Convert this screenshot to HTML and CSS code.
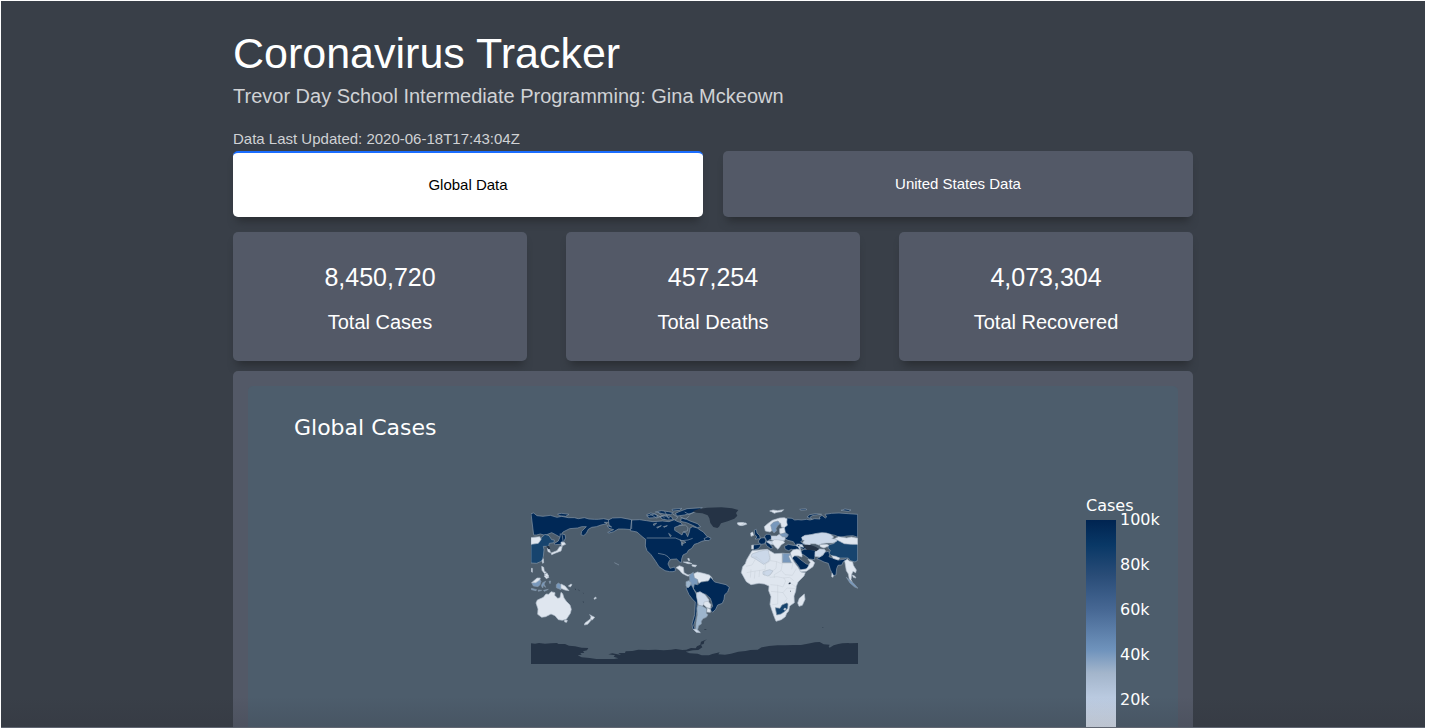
FILE: index.html
```
<!DOCTYPE html>
<html lang="en">
<head>
<meta charset="utf-8">
<title>Coronavirus Tracker</title>
<link rel="stylesheet" href="styles.css">
</head>
<body>
<div class="page">
<main class="container">
  <header class="header">
    <h1 class="title">Coronavirus Tracker</h1>
    <p class="subtitle">Trevor Day School Intermediate Programming: Gina Mckeown</p>
    <p class="updated">Data Last Updated: 2020-06-18T17:43:04Z</p>
  </header>
  <nav class="tabs" aria-label="Data region">
    <button type="button" class="tab tab-selected" aria-pressed="true">Global Data</button>
    <button type="button" class="tab" aria-pressed="false">United States Data</button>
  </nav>
  <section class="stats">
    <div class="stat"><p class="stat-value">8,450,720</p><p class="stat-label">Total Cases</p></div>
    <div class="stat"><p class="stat-value">457,254</p><p class="stat-label">Total Deaths</p></div>
    <div class="stat"><p class="stat-value">4,073,304</p><p class="stat-label">Total Recovered</p></div>
  </section>
  <section class="card">
    <div class="chart">
      <h2 class="chart-title">Global Cases</h2>
      <div class="plot">
        <svg class="map" viewBox="18 18 981 474" role="img" aria-label="World map of cases by country">
          <!-- Eastern Asia and Alaska -->
          <g class="high">
            <path d="M18 41l8-2 10 8 18 2 22-3 20 6 14-3 20 4 18 0 12 3 18-3 14 4 16 1 12 0 16-2 22 5-8 6-12 0 8 4-18 4-14 5-14 2-10 6-6 12-8 7-8-3 2-10 14-14-14 0-12 4-24 2-20 10-4 6 10 2 2 10-8 14-8 6-2-8 2-14-14-8-12-6-20 8-14-4-12 3-8 0z"/>
            <path d="M98 42l12-2 22 3-10 6-20-2zM106 101l6 6 2 16-7 10-16 1-4-3 13-8 5-12zM250 60l12-6 26-1 32 6v30l-24-2-16 0-14 8-14 4-4-2 18-8-14-4-6-8 14 4-8-6z"/>
          </g>
          <path class="mid" d="M18 130l26-5 6-13 10-9 12 4 8 12 8 1-1 8-14 2-2 9-16 0 2 10-2 20-4 14-16 7-17-1z"/>
          <path class="low" d="M18 113l26-3 4 8-8 12-22 3zM67 144l6 4 4 10-8-3zM108 126l10 1 4 6-12 5zM112 139l-4 14-16 6-12 5-2-5 18-7 8-12zM51 182l4-6 1 12-3 2zM19 205l3 0 0 12-3-2z"/>
          <path class="low" d="M50 199l6 3 2 12 6 3-5 4-8-10zM57 228l10-4 5 8-8 4z"/>
          <path class="line" d="M268 188l14 7"/>
          <path class="none" d="M64 138l8 0 4 8-6 2z"/>
          <!-- North America -->
          <g transform="translate(315 0)">
            <g class="high">
              <path d="M5 60l24-1 20 3 20 3 28-2 20 2 16-6 8 5 12 4 4 6-10 2-4 14 14 6 10 2 6 12 5-14 2-12 8-4 14 4 8 6 10 6 10 12 7 8-6 4-16 4-12 6-10 3-8 12-10 6-4 8-12 6-4 12-1 11-6-3-8-8-16 1-6 4-4 10 6 13 14-4 3 11-8 3-10 0-14-3-18-12-10-16-14-20-12-12-5-14 1-20-8-6-8-7-10-9-20-4z"/>
              <path d="M50 44l12-5 14 3 8 6-8 5-20 1zM76 36l18-4 22 3 14 3-8 6-20-2zM90 50l18-4 16 4 6 9-18 1-16-3zM135 41l12-6 24-9 46-3-10 7-20 9-24 6-20 3zM154 54l12 2 14 7 22 8 10 9-10 3-14-7-18-8-18-4zM222 116l12-6 9 5-6 7-12-1zM126 28l30-3-8 6-20 2z"/>
            </g>
            <path class="line" d="M5 60v27M50 114h86l20 8 18-2 14-5M50 48l24-6 20 10M60 42l20 12 20-8 20 8M84 36l20 18M104 34l12 22M164 36l14 8 14-8M150 50l16 8 12-10M128 42l16 10-10 10M84 160l20 4 10 6 8 10"/>
            <path class="lakes" d="M70 72l10-3-8 8zM80 82l14-5-11 7zM100 80l12-3-10 5zM116 100l8 7-3 3zM134 82l14-5 18-2 8 8-2 10-12 2-4 10-12-8-10-6zM150 120l10 3 8 4-10 4zM154 128l4 0 0 8-3 0z"/>
            <path class="none" d="M188 34l18-7 26-4 42-1 32 3 19 5-7 9 4 8-9 9-20 8-20 6-6 10-5 4-12-3-9-12-3-14-5-9-16-6-18-2z"/>
            <path class="low" d="M322 70l10-2 16 1 2 4-14 4-10-2zM160 186l14 0 12 5-12 0zM186 194l14 2-4 5-10-3zM173 176l4-1 2 7-3 0z"/>
            <path class="low" d="M138 203l10-6 12 5 2 16 12 7 9-2 1 5-12 0-16-8-8-10zM190 222l12-6 18 4 18 5 8 8 2 10-8 3-10-3-8 2-8 8-8-5-4-8-14-3z"/>
            <path class="blue" d="M178 225l12-8 3 16 10 6 0 12-4 6 0 12-10-8-14-7 4-16z"/>
          </g>
          <!-- South America -->
          <g transform="translate(315 225)">
            <path class="high" d="M190 42l3-15 10 2 10-8 22-3 7-11 12 14 34 8 10 8-5 14-9 8-2 14-5 12-14 5-6 13-9 9-8-8 8-10-3-12-4-12-14-12-16-2-12-4-8-10zM172 31l12-2 8 15 6 12 6 15-3 18 0 20-4 22-6 20 5 15-8-5-2-14 8-28 2-38-9-9-10-13-8-18z"/>
            <path class="gray" d="M168 20l8-3 8 6-4 10-6 6-6-6z"/>
            <path class="pale" d="M200 54l10-4 15 9 12 16-4 10-12 3-6 8-9-3-3-14-3-12z"/>
            <path class="low" d="M222 81l12-2 9 10-2 11-10-2-10-9zM232 98l10 6-1 8-11-1z"/>
            <path class="gray" d="M204 90l12 3 14 8-1 14 5 4-5 8-10 4-5 8 0 8-8 5-3 12 6 8-12-9 1-20 4-24-1-20z"/>
            <path class="pale" d="M190 163l9 0 12 10-12-1z"/>
            <path class="none" d="M222 162l9 1-6 2z"/>
          </g>
          <!-- Oceania -->
          <g transform="translate(0 225)">
            <path class="low" d="M38 118l1-16-6-18 4-9 18-8 8-10 8 1 7-8 12 3-1 8 9 9 7-2 3-16 5 4 4 13 7 10 11 11 4 13-3 12-12 18-12 3-12-2-10-12-12-5-16 8-12 2zM119 135l8 1-2 6-6-1zM194 119l7 4 8 4-7 8-6-2 2-8zM196 132l2 4-10 12-10 2 2-6z"/>
            <path class="blue" d="M20 23l9-1 14-11 5 8-3 10-6 6-14-2zM53 23l9-4-5 8 5 10-7-6-2 8-4-7zM72 19l5-1-2 8zM19 40l16 4-2 3-14-3zM40 45l10 1-10 3zM56 46l14-3-12 6zM94 29l6-5 8 5v15l-14-6z"/>
            <path class="low" d="M20 23l16-14 10 0-2 6-12 8zM108 27l12 6 12 14-12-2-12-5zM130 33l8-6 3 2-5 7zM207 70l5-4 2 4-6 3zM58-1l8-5 5 9-5 3z"/>
            <path class="none" d="M147 36l2 4 4 3-1 3zM158 43l5 3 1 3zM173 53l3 1 0 2zM173 79l4 2-2 2z"/>
          </g>
          <!-- Antarctica -->
          <path class="ice" d="M18 430l12 1 12-2 18 2 18-1 18-1 4 3 20 0 12 5 18 2 20 4 20 1-4 7-12 3 4 5-12 0 4 5-12 2 12 6 24 2 20 3h54l12-2-14-5 4-4-20-3 12-3 26 5-8-6 20 0 2-5 20-1 18-4 30 1 22-1 24 2 22-2 14-2 20 3 12-1 14-5 14 1 4-6 10-5 2-9 18-7-8 6-2 8-8 2 4 8-12 8-16 1-22 4 12 5 24 1 12 5 22 0 10-4 22-5-4 6 20 1 18-3 22-6 22-2 14-3 22-1 12-7 22-4 26-2 24 0 24-1 22 0 20-4 22-4 14-1 12 7 18 1-3 6 3 3 12-7 14-4 12-2 18-1 4 1 24-1 14-2 12 3v63H18z"/>
          <!-- Europe and Asia -->
          <g transform="translate(630 0)">
            <path class="high" d="M150 63l7-9 14 1 8 5 10-1 10 1 16-2 10 2 14-4 16 1-2-6 8-5 10 8 4-3-5-8 20-3 22-1 28 2 28 2v69l-14-5-18 1-22 4-14-6-14-3-18 2-10-2-16 3-18-1-8 6-14 2 3 6-8 6 10 8 6 11-8 4-14-8-10-5-6-10-16-4-12-6 2-14-6-18zM216 51l8-7 20-3 16 2-12 1-16 3-7 5 6 6zM318 31l12-4 18 3-8 4zM194 28l18-2 4 3-18 2zM148 139l12-6 14 3 16 1 5 11-12 3-14-3-8 4-10-4z"/>
            <path class="high" d="M58 90l6-2 2 11 8 8 2 9-16 1 6-6-7-8zM71 122l6-8 14-1 3 8-4 10-12 2-8-6zM88 111l5-8 10 0 6 4 1 10-9 3 2 4-10-1zM55 135l18-2 5 3-8 10-12 4-4-4zM90 126l12 0 4 8 8 9-7 3-12-9z"/>
            <path class="high" d="M172 166l12 2 14 12 16 12 11 2-5 10-22 9-8-15-10-13-8-10zM197 154l10-6 14 0 18 2 3 7-3 16 0 6-16-2-16-12-10-4-4-7zM245 176l9-5 10-5 4-9 12-3 5 8-3 8 10 4 18 6 18-2 10-6-2 10-11 3-5 10-11 1-4 10-2 19-8 2-9-18-6-19-13-4-12-6z"/>
            <path class="mid" d="M278 136l10-3 10-3 6-11 10-5 8 3 12 4 14 2 20 6v52l-8 5-14-4-6-8-8 0-14 0-10 0-14-4-12-9 4-10-6-5z"/>
            <path class="pale" d="M200 112l10-6 18-2 12-3 20-3 14 1 12 4 10 8-6 5 14 2 2 5-12 6-20 0-14 2-9 4-10-4-14 0-4 7-12-5-8-4 5-8-6-2zM184 138l6-6 12 2 4 8-10-2zM198 157l-2-11-3-12-8-2z"/>
            <path class="low" d="M299 116l12-6 24 4 14-3 19 4v18l-18 0-22-2-14-7zM254 134l22-1 6 4-15 7-11-4zM166 159l8-9 12-3 10 4 5 12 0 8-12-4-10 0-8 7z"/>
            <path class="pale" d="M109 108l16 0 8-5 16 4 2 6-2 8-16 2-24-3zM98 123l16 1 14-1 3 5-8 6-16-1-10-6zM240 156l14-9 14 1 4 5-8 11-10 7-14-2z"/>
            <path class="low" d="M118 119l9 0 18 3 4 6-10 6-10 14-9-8-10-14zM134 86l14-4 3 16-14 7-3-8zM47 99l6-3 3 10-8 3zM50 136l5-1 0 12-5 0zM8 68l18 0 1 4-10 4-8-2zM104 33l10-3 14 2 18-3-6 6-14 2-8 3-8-5z"/>
            <path class="low" d="M88 80l10-9 14-10 22-7 14-1 8 4-1 9 2 10-8 6-10-1-2-12-14 4-10 8 0 9-8 6-14-3z"/>
            <path class="blue" d="M107 75l8-8 14-4 6 8-7 6-5 9 2 6-8 7-6-8zM134 103l18-5 8 6-4 8-14-2z"/>
            <path class="none" d="M203 136l14-2 10 1 16 6 9 6-8 6-14-3-14 0zM190 214l18 2 4 6-18 4z"/>
            <path class="low" d="M192 210l22-3 5-7 7-13-7-9 12 3 8 7-5 12-20 14-18 2zM329 182l8-4 6 5 10 3 2 10 9 14-2 8-8-4-4 9-2 16 4 8-9-9-3-16-6-10zM352 225l7 3 4 6-8-2zM291 220l4 6-1 6-4-2zM290 167l12 2 12 5-4 6-15-5z"/>
            <path class="low" d="M51 152l22-2 24-2 10 6 12 7 22-1 23 1 4 9 10 17 12 16 7 13 14 2-4 10-18 18-5 13-2 15-5 14 1 20-14 10-3 15-6 7-4 10-12 9-16 5-6-15-7-20-5-16 3-23-7-18 1-14-14-6-16-2-24 4-14-9-10-18-5-9 4-18 8-9 4-12zM208 282l2 16-8 18-10 3-4-10 5-14z"/>
            <path class="pale" d="M51 162l22-8 18-4 9 1 4 22-2 10-16 10-24-16-14-7zM84 215l20-6 10 4-8 11-8 4-14-5z"/>
            <path class="blue" d="M142 160l24 1-5 9 8 18-27 0zM334 232l10 8 12 10 13 15-10-4-14-12z"/>
            <path class="mid" d="M121 323l14 2 6-10 14-6 4 2-1 14-8 9-12 8-13 3z"/>
            <path class="low" d="M146 327l4-3 4 3-5 4z"/>
            <path class="borders" d="M51 171l14 0 26 22 16-11-2-20M65 171l-14 24-18 4M91 193l0 15-14 3-16 2-26 5M107 182l18 3 17 7 2-32M142 188h32M125 185l-2 20-10 8-12 18M142 192l-4 20-20 12 0 10M140 212l10 12 22 2 12-20M104 232l22-2 20 4 18-2M108 274l20 2 0-20-22-2M128 256l16 5 8-18-6-10M158 244l24 16M128 276l16 2 12-14 24 2M128 276l0 36-16 2M144 278l12 18-10 14M48 208l-2 25M60 214l-2 22M74 211l-2 20M90 210l-2 18M164 232l12 10M174 188l-4 20"/>
            <path class="none" d="M161 249l5-2 1 5-6 1zM165 270l2 6-2-1zM262 381l4 2-3 1z"/>
          </g>
        </svg>
        <div class="legend">
          <h3 class="legend-title">Cases</h3>
          <div class="scale">
            <div class="bar"></div>
            <ul class="ticks"><li>100k</li><li>80k</li><li>60k</li><li>40k</li><li>20k</li></ul>
          </div>
        </div>
      </div>
    </div>
  </section>
</main>
<footer class="footer"></footer>
</div>
</body>
</html>
```
FILE: styles.css
```
* { box-sizing: border-box; }
body { margin: 0; background: #fff; color: #fff; font-family: "Liberation Sans", Arial, sans-serif; }
h1, h2, h3, p, ul { margin: 0; padding: 0; font-weight: 400; }
.page { min-height: 100vh; display: flex; flex-direction: column; border: solid #fff; border-width: 1px 4px 0 1px; background: #393f48; }
.container { width: 100%; max-width: 960px; margin: 0 auto; flex: 1; display: flex; flex-direction: column; }
.header { padding: 24px 0 2px; }
.title { font-size: 43px; line-height: 56px; }
.subtitle { margin-top: 2px; font-size: 20px; line-height: 26px; color: #d0d2d5; }
.updated { margin-top: 20px; font-size: 15px; line-height: 20px; color: #d0d2d5; }
.tabs { display: grid; grid-template-columns: 1fr 1fr; gap: 20px; }
.tab { height: 66px; padding: 0 6px 2px; border: 0; border-radius: 5px; background: #535967; color: #fff; font: 15px "Liberation Sans", Arial, sans-serif; box-shadow: 0 8px 8px -4px #292d32; }
.tab-selected { border-top: 2px solid #1a6dff; background: #fff; color: #000; }
.stats { display: grid; grid-template-columns: repeat(3, 1fr); gap: 39px; margin: 15px 0 10px; }
.stat { padding: 25px 0 24px; border-radius: 5px; background: #535967; text-align: center; box-shadow: 0 8px 8px -4px #292d32; }
.stat-value { font-size: 25px; line-height: 40px; }
.stat-label { margin-top: 10px; font-size: 20px; line-height: 30px; }
.card { flex: 1; display: flex; flex-direction: column; padding: 15px 15px 0; border-radius: 5px 5px 0 0; background: #535967; }
.chart { flex: 1; display: flex; flex-direction: column; border-radius: 5px 5px 0 0; background: #4d5d6c; font-family: "DejaVu Sans", Verdana, sans-serif; }
.chart-title { padding: 28px 46px 0; font-size: 22px; line-height: 28px; }
.plot { flex: 1; display: grid; grid-template-columns: 1fr 327px 1fr; padding: 54px 0 0; }
.map { grid-column: 2; width: 100%; margin-top: 10px; margin-left: -19px; }
.legend { display: flex; flex-direction: column; justify-self: end; width: 92px; }
.legend-title { font-size: 16px; line-height: 20px; }
.scale { flex: 1; display: flex; gap: 4px; margin-top: 4px; }
.bar { width: 30px; background: linear-gradient(#002451 0, #093866 25px, #294c77 55px, #476894 90px, #6f93bc 130px, #a3b5cb 153px, #bccce2 180px, #d8e0ec 208px); }
.ticks { list-style: none; margin-top: -10px; font-size: 16px; line-height: 20px; display: flex; flex-direction: column; gap: 25px; }
.map path { stroke: #8797a7; stroke-width: 2; stroke-linejoin: round; }
.high path, .map .high { fill: #002856; }
.map .mid { fill: #17446e; }
.map .low { fill: #dfe6ef; stroke: #b4c0cd; }
.map .pale { fill: #cbd8e9; stroke: #b4c0cd; }
.map .gray { fill: #9db5cd; }
.map .blue { fill: #7898bc; }
.map .none, .map .ice { fill: #253345; stroke: none; }
.map .lakes { fill: #4d5d6c; }
.map .line, .map .borders { fill: none; }
.map .borders { stroke: #bcc4ce; stroke-width: 1; }
.footer { position: relative; height: 1px; background: #606672; }
.footer::before { content: ""; position: absolute; left: 0; right: 0; bottom: 1px; height: 30px; background: linear-gradient(transparent, rgba(40, 40, 50, .15)); pointer-events: none; }
```
